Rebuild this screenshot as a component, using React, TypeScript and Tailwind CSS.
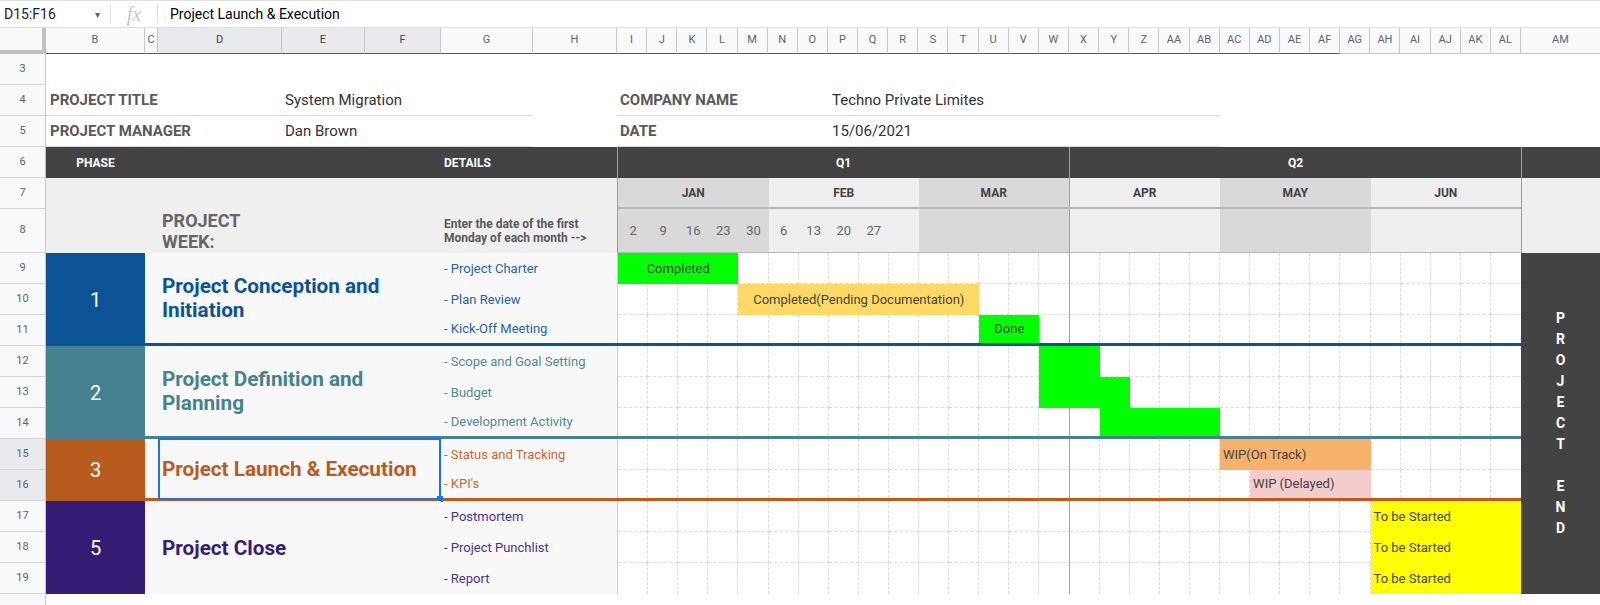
import React from "react";

type Bar = { start: number; len: number; bg: string; text?: string; left?: boolean };
type Task = { name: string; bar?: Bar };
type Phase = {
  num: string;
  title: string;
  numBg: string;
  text: string;
  detail: string;
  line: string;
  selected?: boolean;
  tasks: Task[];
};

const GREEN = "bg-[#00ff00]";

const phases: Phase[] = [
  {
    num: "1",
    title: "Project Conception and Initiation",
    numBg: "bg-[#0b5394]",
    text: "text-[#0b5394]",
    detail: "text-[#2862a0]",
    line: "border-b-[3px] border-[#0b5394]",
    tasks: [
      { name: "- Project Charter", bar: { start: 0, len: 4, bg: GREEN, text: "Completed" } },
      {
        name: "- Plan Review",
        bar: { start: 4, len: 8, bg: "bg-[#ffd966]", text: "Completed(Pending Documentation)" },
      },
      { name: "- Kick-Off Meeting", bar: { start: 12, len: 2, bg: GREEN, text: "Done" } },
    ],
  },
  {
    num: "2",
    title: "Project Definition and Planning",
    numBg: "bg-[#45818e]",
    text: "text-[#45818e]",
    detail: "text-[#4f8a97]",
    line: "border-b-[3px] border-[#45818e]",
    tasks: [
      { name: "- Scope and Goal Setting", bar: { start: 14, len: 2, bg: GREEN } },
      { name: "- Budget", bar: { start: 14, len: 3, bg: GREEN } },
      { name: "- Development Activity", bar: { start: 16, len: 4, bg: GREEN } },
    ],
  },
  {
    num: "3",
    title: "Project Launch & Execution",
    numBg: "bg-[#b85b1f]",
    text: "text-[#b85b1f]",
    detail: "text-[#c2692c]",
    line: "border-b-[3px] border-[#c05a1c]",
    selected: true,
    tasks: [
      {
        name: "- Status and Tracking",
        bar: { start: 20, len: 5, bg: "bg-[#f6b26b]", text: "WIP(On Track)", left: true },
      },
      { name: "- KPI's", bar: { start: 21, len: 4, bg: "bg-[#f4cccc]", text: "WIP (Delayed)", left: true } },
    ],
  },
  {
    num: "5",
    title: "Project Close",
    numBg: "bg-[#351c75]",
    text: "text-[#351c75]",
    detail: "text-[#4a3587]",
    line: "",
    tasks: [
      { name: "- Postmortem", bar: { start: 25, len: 5, bg: "bg-[#ffff00]", text: "To be Started", left: true } },
      {
        name: "- Project Punchlist",
        bar: { start: 25, len: 5, bg: "bg-[#ffff00]", text: "To be Started", left: true },
      },
      { name: "- Report", bar: { start: 25, len: 5, bg: "bg-[#ffff00]", text: "To be Started", left: true } },
    ],
  },
];

const ganttLetters = [
  "I", "J", "K", "L", "M", "N", "O", "P", "Q", "R", "S", "T", "U", "V", "W",
  "X", "Y", "Z", "AA", "AB", "AC", "AD", "AE", "AF", "AG", "AH", "AI", "AJ", "AK", "AL",
];

const leftCols = [
  { l: "B", w: "w-[99px]" },
  { l: "C", w: "w-[13px]" },
  { l: "D", w: "w-[124px]", sel: true },
  { l: "E", w: "w-[83px]", sel: true },
  { l: "F", w: "w-[76px]", sel: true },
  { l: "G", w: "w-[92px]" },
  { l: "H", w: "w-[84px]" },
];

const months = [
  { m: "JAN", dark: true, dates: ["2", "9", "16", "23", "30"] },
  { m: "FEB", dark: false, dates: ["6", "13", "20", "27", ""] },
  { m: "MAR", dark: true, dates: [] },
  { m: "APR", dark: false, dates: [] },
  { m: "MAY", dark: true, dates: [] },
  { m: "JUN", dark: false, dates: [] },
];

const rowNums = [3, 4, 5, 6, 7, 8, 9, 10, 11, 12, 13, 14, 15, 16, 17, 18, 19];

const FormulaBar = () => (
  <div className="flex h-[28px] items-center border-t border-b border-[#e0e0e0] bg-white">
    <div className="flex w-[110px] items-center justify-between pl-[4px] pr-[10px] text-[14px] text-[#202124]">
      <span>D15:F16</span>
      <span className="text-[10px] text-[#5f6368]">▾</span>
    </div>
    <div className="h-[20px] w-px bg-[#e0e0e0]" />
    <div className="flex w-[46px] items-center justify-center font-['Liberation_Serif',serif] text-[20px] italic text-[#c4c7c5]">
      fx
    </div>
    <div className="h-[18px] w-px bg-[#dadce0]" />
    <div className="pl-[12px] text-[14px] text-[#000]">Project Launch &amp; Execution</div>
  </div>
);

const ColumnHeader = () => (
  <div className="flex h-[26px] text-[11px] text-[#5f6368]">
    <div className="w-[46px] border-r-4 border-b-4 border-[#c0c0c0] bg-[#f8f9fa]" />
    {leftCols.map((c) => (
      <div
        key={c.l}
        className={`${c.w} flex items-center justify-center border-r border-b border-r-[#c7c7c7] border-b-[#35608f] ${
          c.sel ? "bg-[#e8eaed] text-[#3c4043]" : "bg-[#f8f9fa]"
        }`}
      >
        {c.l}
      </div>
    ))}
    <div className="grid w-[904px] grid-cols-[repeat(30,minmax(0,1fr))]">
      {ganttLetters.map((l, i) => (
        <div
          key={l}
          className={`flex items-center justify-center border-r border-b border-r-[#c7c7c7] bg-[#f8f9fa] ${
            i < 24 ? "border-b-[#35608f]" : "border-b-[#c7c7c7]"
          }`}
        >
          {l}
        </div>
      ))}
    </div>
    <div className="flex flex-1 items-center justify-center border-b border-[#c7c7c7] bg-[#f8f9fa]">AM</div>
  </div>
);

const RowNumbers = () => (
  <div className="flex w-[46px] flex-col border-r border-[#c7c7c7] bg-[#f8f9fa] text-[11px] text-[#5f6368]">
    {rowNums.map((n) => (
      <div
        key={n}
        className={`flex items-center justify-center border-b border-[#d5d5d5] ${
          n === 8 ? "h-[44px]" : "h-[31px]"
        } ${n === 15 || n === 16 ? "bg-[#e8eaed]" : ""}`}
      >
        {n}
      </div>
    ))}
    <div className="flex-1" />
  </div>
);

const GanttRow = ({ bar, last }: { bar?: Bar; last: boolean }) => (
  <div className={`grid grid-cols-[repeat(30,minmax(0,1fr))] ${last ? "flex-1" : "h-[31px]"}`}>
    {Array.from({ length: 30 }).map((_, i) => (
      <div
        key={i}
        style={{ gridColumn: i + 1, gridRow: 1 }}
        className={`border-dashed border-[#dadada] ${last ? "" : "border-b"} ${i < 29 ? "border-r" : ""} ${
          i === 14 ? "[border-right-style:solid] border-r-[#a3a3a3]" : ""
        }`}
      />
    ))}
    {bar && (
      <div
        style={{ gridColumn: `${bar.start + 1} / span ${bar.len}`, gridRow: 1 }}
        className={`${bar.bg} flex items-center whitespace-nowrap text-[13px] text-[#434343] ${
          bar.left ? "pl-[3px]" : "justify-center"
        }`}
      >
        {bar.text}
      </div>
    )}
  </div>
);

const PhaseBlock = ({ p }: { p: Phase }) => {
  const h = p.tasks.length === 3 ? "h-[93px]" : "h-[62px]";
  return (
    <div className={`flex ${h}`}>
      <div className={`flex w-[99px] items-center justify-center text-[20px] text-white ${p.numBg}`}>{p.num}</div>
      <div className={`flex flex-1 ${p.line}`}>
        <div className="w-[13px] bg-[#f8f8f8]" />
        <div className="relative flex w-[283px] items-center bg-[#f8f8f8] pl-[4px]">
          <div className={`text-[20.7px] font-bold leading-[24px] ${p.text}`}>{p.title}</div>
          {p.selected && (
            <div className="absolute -top-px right-0 -bottom-[2px] left-0 border-2 border-[#1a73e8]">
              <div className="absolute -right-[4px] -bottom-[4px] h-[6px] w-[6px] bg-[#1a73e8]" />
            </div>
          )}
        </div>
        <div className="flex w-[176px] flex-col bg-[#f8f8f8]">
          {p.tasks.map((t, i) => (
            <div
              key={t.name}
              className={`flex items-center pl-[3px] text-[13px] ${p.detail} ${
                i === p.tasks.length - 1 ? "flex-1" : "h-[31px]"
              }`}
            >
              {t.name}
            </div>
          ))}
        </div>
        <div className="flex flex-1 flex-col border-l border-[#cccccc] bg-white">
          {p.tasks.map((t, i) => (
            <GanttRow key={t.name} bar={t.bar} last={i === p.tasks.length - 1} />
          ))}
        </div>
      </div>
    </div>
  );
};

const endLetters = ["P", "R", "O", "J", "E", "C", "T", "", "E", "N", "D"];

const Sheet = () => (
  <div className="flex w-[1554px] flex-col">
    <div className="h-[31px]" />

    <div className="flex h-[31px] text-[15px]">
      <div className="flex w-[236px] items-center border-b border-[#d9d9d9] pl-[4px] font-bold text-[#595959]">
        PROJECT TITLE
      </div>
      <div className="flex w-[251px] items-center border-b border-[#d9d9d9] pl-[3px] text-[#333333]">
        System Migration
      </div>
      <div className="w-[84px]" />
      <div className="flex w-[211px] items-center border-b border-[#d9d9d9] pl-[3px] font-bold text-[#595959]">
        COMPANY NAME
      </div>
      <div className="flex w-[392px] items-center border-b border-[#d9d9d9] pl-[4px] text-[#333333]">
        Techno Private Limites
      </div>
    </div>

    <div className="flex h-[31px] text-[15px]">
      <div className="flex w-[236px] items-center border-b border-[#d9d9d9] pl-[4px] font-bold text-[#595959]">
        PROJECT MANAGER
      </div>
      <div className="flex w-[251px] items-center border-b border-[#d9d9d9] pl-[3px] text-[#333333]">Dan Brown</div>
      <div className="w-[84px]" />
      <div className="flex w-[211px] items-center border-b border-[#d9d9d9] pl-[3px] font-bold text-[#595959]">
        DATE
      </div>
      <div className="flex w-[392px] items-center border-b border-[#d9d9d9] pl-[4px] text-[#333333]">15/06/2021</div>
    </div>

    <div className="flex h-[31px] bg-[#434343] text-[12px] font-bold text-white">
      <div className="flex w-[99px] items-center justify-center">PHASE</div>
      <div className="w-[296px]" />
      <div className="flex w-[176px] items-center pl-[3px]">DETAILS</div>
      <div className="flex w-[904px] border-l border-[#9e9e9e]">
        <div className="flex flex-1 items-center justify-center border-r border-[#9e9e9e]">Q1</div>
        <div className="flex flex-1 items-center justify-center">Q2</div>
      </div>
      <div className="flex-1 border-l border-[#9e9e9e]" />
    </div>

    <div className="flex h-[75px]">
      <div className="flex w-[571px] flex-col bg-[#efefef]">
        <div className="h-[31px]" />
        <div className="flex flex-1">
          <div className="w-[112px]" />
          <div className="flex w-[283px] items-center pl-[4px] text-[18px] font-bold leading-[21px] text-[#666666]">
            PROJECT
            <br />
            WEEK:
          </div>
          <div className="flex w-[176px] items-center pl-[3px] text-[12px] font-bold leading-[14px] text-[#595959]">
            Enter the date of the first
            <br />
            Monday of each month --&gt;
          </div>
        </div>
      </div>
      <div className="flex w-[904px] flex-col border-l border-[#9e9e9e]">
        <div className="grid h-[31px] grid-cols-6 border-b-2 border-[#b7b7b7]">
          {months.map((m, i) => (
            <div
              key={m.m}
              className={`flex items-center justify-center text-[12px] font-bold text-[#434343] ${
                m.dark ? "bg-[#d9d9d9]" : "bg-[#efefef]"
              } ${i === 2 ? "border-r border-[#9e9e9e]" : ""}`}
            >
              {m.m}
            </div>
          ))}
        </div>
        <div className="grid flex-1 grid-cols-6 border-b border-[#b7b7b7]">
          {months.map((m, i) => (
            <div
              key={m.m}
              className={`grid grid-cols-5 text-[13px] text-[#666666] ${m.dark ? "bg-[#d9d9d9]" : "bg-[#efefef]"} ${
                i === 2 ? "border-r border-[#9e9e9e]" : ""
              }`}
            >
              {m.dates.map((d, j) => (
                <div key={j} className="flex items-center justify-center">
                  {d}
                </div>
              ))}
            </div>
          ))}
        </div>
      </div>
      <div className="flex-1 border-l border-[#9e9e9e] bg-[#efefef]" />
    </div>

    <div className="flex h-[341px]">
      <div className="flex w-[1475px] flex-col">
        {phases.map((p) => (
          <PhaseBlock key={p.num} p={p} />
        ))}
      </div>
      <div className="flex flex-1 flex-col items-center justify-center bg-[#434343] text-[14px] font-bold leading-[21px] text-white">
        {endLetters.map((l, i) => (
          <span key={i} className="h-[21px]">
            {l}
          </span>
        ))}
      </div>
    </div>

    <div className="flex-1" />
  </div>
);

export default function App() {
  return (
    <div className="flex h-[605px] w-[1600px] flex-col overflow-hidden bg-white font-['Roboto',sans-serif]">
      <FormulaBar />
      <ColumnHeader />
      <div className="flex flex-1">
        <RowNumbers />
        <Sheet />
      </div>
    </div>
  );
}
